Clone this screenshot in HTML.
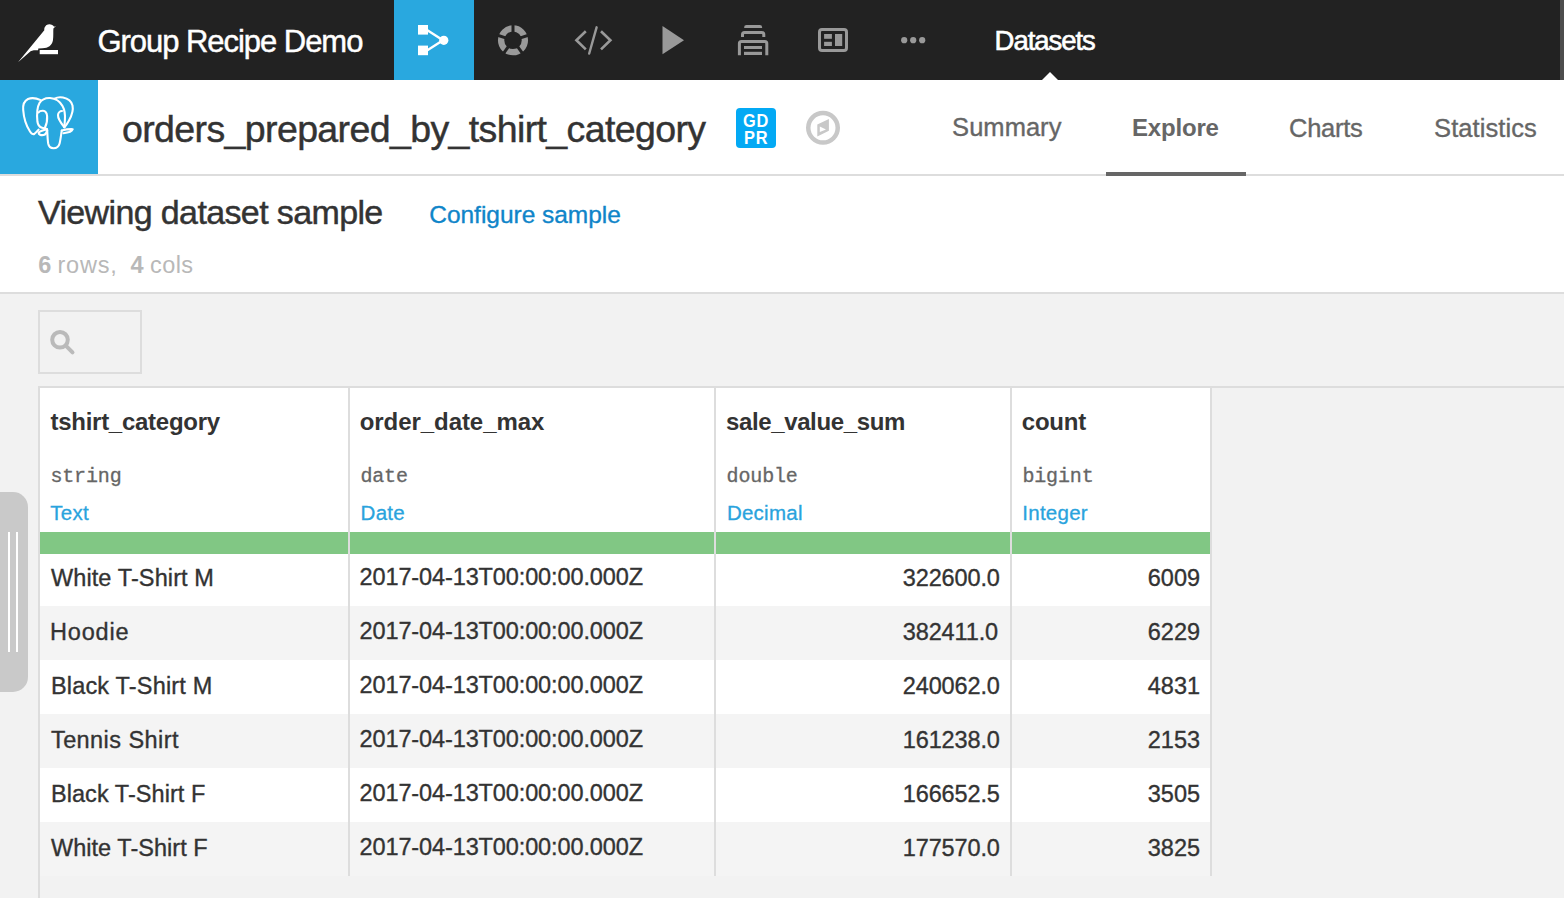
<!DOCTYPE html>
<html><head><meta charset="utf-8">
<style>
*{box-sizing:border-box;margin:0;padding:0}
html,body{width:1564px;height:898px;overflow:hidden;background:#f2f2f2;font-family:"Liberation Sans",sans-serif}
.a{position:absolute}
.t{position:absolute;white-space:nowrap;line-height:1}
svg{position:absolute;overflow:visible}
</style></head><body>
<div class="a" style="left:0;top:0;width:1564px;height:80px;background:#222"></div>
<div class="a" style="left:0;top:80px;width:1564px;height:212px;background:#fff"></div>
<div class="a" style="left:0;top:174px;width:1564px;height:2px;background:#ddd"></div>
<div class="a" style="left:0;top:292px;width:1564px;height:2px;background:#ddd"></div>

<!-- bird -->
<svg width="1564" height="80" style="left:0;top:0"><path fill="#fff" d="M18,62.3 L44.3,30.3 C43.9,27.2 46.2,24.2 49.2,24.2 C51.6,24.2 53.2,25.3 54.1,26.8 L56,26.1 L53.4,28.4 C53.1,31.5 53.6,36 52.9,40.5 C52,45.5 48.2,48.1 42.5,48.3 L38.3,48.4 L38.1,50.2 L33.8,50.2 C32.5,50.3 31.5,50.8 30.6,51.3 Z"/><rect fill="#fff" x="39.7" y="50" width="18.3" height="4.2"/></svg>
<div class="t" style="left:97.45px;top:25.96px;font-size:31px;letter-spacing:-1.039px;color:#fff;font-weight:400;font-family:'Liberation Sans',sans-serif;-webkit-text-stroke:0.45px #fff;">Group Recipe Demo</div>
<div class="a" style="left:394px;top:0;width:80px;height:80px;background:#29a8df"></div>
<svg width="1564" height="80" style="left:0;top:0"><rect fill="#fff" x="418" y="25" width="10" height="9.6"/><rect fill="#fff" x="418" y="45.6" width="10" height="9.6"/><path d="M427,30 L443,40.3 L427,50.5" fill="none" stroke="#fff" stroke-width="2.4"/><circle cx="443.8" cy="40.3" r="4.6" fill="#fff"/><g transform="translate(513,40.3)"><circle r="11.9" fill="none" stroke="#999" stroke-width="6.3"/><rect x="-1.5" y="-17" width="3" height="10" fill="#222" transform="rotate(0)"/><rect x="-1.5" y="-17" width="3" height="10" fill="#222" transform="rotate(72)"/><rect x="-1.5" y="-17" width="3" height="10" fill="#222" transform="rotate(144)"/><rect x="-1.5" y="-17" width="3" height="10" fill="#222" transform="rotate(216)"/><rect x="-1.5" y="-17" width="3" height="10" fill="#222" transform="rotate(288)"/></g><path d="M585.8,31.3 L576.4,40.3 L585.8,49.4 M601,31.3 L610.4,40.3 L601,49.4" fill="none" stroke="#999" stroke-width="2.6"/><path d="M596.6,27.3 L589.2,53.5" fill="none" stroke="#999" stroke-width="2.4" stroke-linecap="round"/><path d="M662.5,26 L684,40.3 L662.5,54.2 Z" fill="#999"/><path d="M744.2,28 L744.2,27 Q744.2,25 746.5,25 L759.8,25 Q762.1,25 762.1,27 L762.1,28 Z" fill="#999"/><path d="M742.5,37 L742.5,34.5 Q742.5,32.5 744.5,32.5 L761.8,32.5 Q763.8,32.5 763.8,34.5 L763.8,37" fill="none" stroke="#999" stroke-width="3"/><path d="M739.4,55.2 L739.4,43.5 Q739.4,41.5 741.4,41.5 L764.8,41.5 Q766.8,41.5 766.8,43.5 L766.8,55.2" fill="none" stroke="#999" stroke-width="3"/><rect x="744" y="46" width="18" height="3" fill="#999"/><rect x="744" y="51.8" width="18" height="3.2" fill="#999"/><rect x="819.5" y="29.4" width="27" height="21.2" rx="2.5" fill="none" stroke="#999" stroke-width="3"/><rect x="824.1" y="34" width="7.8" height="4.8" fill="#999"/><rect x="824.1" y="41.8" width="7.8" height="4.2" fill="#999"/><rect x="835" y="34" width="7.2" height="12" fill="#999"/><circle cx="904.2" cy="40.2" r="3.1" fill="#999"/><circle cx="913.2" cy="40.2" r="3.1" fill="#999"/><circle cx="922.2" cy="40.2" r="3.1" fill="#999"/><path d="M1042,80 L1050,72 L1058,80 Z" fill="#fff"/></svg>
<div class="t" style="left:994.6px;top:26.82px;font-size:27.5px;letter-spacing:-1.05px;color:#fff;-webkit-text-stroke:0.6px #fff">Datasets</div>
<div class="a" style="left:1560px;top:0;width:4px;height:80px;background:#4d4d4d"></div>
<div class="a" style="left:0;top:80px;width:98px;height:94px;background:#29a8df"></div>
<svg width="1564" height="200" style="left:0;top:0"><g fill="none" stroke="#fff" stroke-width="2.1" stroke-linecap="round" stroke-linejoin="round"><path d="M40.7,100.1 C36,98 31,97.8 28,99 C24,101 22.8,105 23.2,110 C23.8,118 27,127 30,131.5 C31.5,133.8 33,134.8 34.5,133.8 C36,132.6 37.5,130.8 38.6,129.6"/><path d="M64.3,127 C64.5,125.5 64.7,123 64.9,120 C65.2,116 64.8,110 62.5,106 C60,101.5 55,98.3 50,98 C46,97.8 42,99 39.5,103 C37.2,107 36.8,115 37.4,121.5 C37.8,124.5 39.5,127 42,127.8 C43.5,128.3 45.5,128.6 47,129"/><path d="M38.5,112.5 C39.5,111 41,110.7 43,110.8 C45.5,111 46.8,113 47.1,116 C47.4,120 46.5,124.5 45,127.5"/><path d="M54.7,98.6 C57,97.2 60,96.9 63,97.5 C68,98.5 71.5,101.5 72.5,105.5 C73.5,110 71.5,116 69,120.5 C67.5,123.2 65.8,125.8 64.3,127.5"/><path d="M62,111 C60,111 58.2,112.8 58,115 C57.8,118.5 60.5,122.5 64.2,127"/><path d="M47,129.3 C44,130 40.5,131 38.6,132.5 C38.5,134.5 41,135.5 43.5,135 C45.5,134.5 46.8,132.5 47.2,130"/><path d="M47.2,130 C47.4,134 47.6,140 48.2,143.5 C48.8,146.5 50.8,148.2 53.5,148.2 C56.5,148.2 58.8,146.5 59.6,143.5 C60.5,140 61.2,134 61.8,130.5"/><path d="M61.8,130.5 C64.5,129.8 69,129 72.7,129.2 C72,131.3 68,132.8 63.5,133.2"/></g></svg>
<div class="t" style="left:122.0px;top:111.26px;font-size:37.5px;letter-spacing:-0.621px;color:#333;font-weight:400;font-family:'Liberation Sans',sans-serif;-webkit-text-stroke:0.45px #333;">orders_prepared_by_tshirt_category</div>
<div class="a" style="left:736px;top:108px;width:40px;height:40px;border-radius:4px;background:#03a9f4"></div>
<div class="t" style="left:742.8399999999999px;top:110.64px;font-size:19px;letter-spacing:1px;font-weight:700;color:#fff;transform:scaleX(0.86);transform-origin:0 0">GD</div>
<div class="t" style="left:743.91px;top:127.73px;font-size:19px;letter-spacing:1px;font-weight:700;color:#fff;transform:scaleX(0.86);transform-origin:0 0">PR</div>
<svg width="1564" height="200" style="left:0;top:0"><circle cx="823" cy="127.8" r="14.75" fill="none" stroke="#c8c8c8" stroke-width="4.5"/><path fill="#c8c8c8" fill-rule="evenodd" d="M817.3,124.5 L828.9,119 L828.9,130.8 L817.3,136.4 Z M819.8,126.4 L826,129.5 L819.8,132 Z"/></svg>
<div class="t" style="left:952.12px;top:115.21px;font-size:25.5px;letter-spacing:0.032px;color:#666;font-weight:400;font-family:'Liberation Sans',sans-serif;-webkit-text-stroke:0.35px #666;">Summary</div>
<div class="t" style="left:1132.02px;top:115.68px;font-size:24px;letter-spacing:-0.19px;color:#666;font-weight:700;font-family:'Liberation Sans',sans-serif;">Explore</div>
<div class="t" style="left:1289.12px;top:115.50999999999999px;font-size:25.5px;letter-spacing:-0.306px;color:#666;font-weight:400;font-family:'Liberation Sans',sans-serif;-webkit-text-stroke:0.35px #666;">Charts</div>
<div class="t" style="left:1434.12px;top:115.50999999999999px;font-size:25.5px;letter-spacing:0.077px;color:#666;font-weight:400;font-family:'Liberation Sans',sans-serif;-webkit-text-stroke:0.35px #666;">Statistics</div>
<div class="a" style="left:1106px;top:172px;width:140px;height:4px;background:#666"></div>
<div class="t" style="left:37.96px;top:195.22px;font-size:34px;letter-spacing:-0.627px;color:#333;font-weight:400;font-family:'Liberation Sans',sans-serif;-webkit-text-stroke:0.45px #333;">Viewing dataset sample</div>
<div class="t" style="left:429.28px;top:203.06px;font-size:24.5px;letter-spacing:-0.029px;color:#0f85c9;font-weight:400;font-family:'Liberation Sans',sans-serif;-webkit-text-stroke:0.35px #0f85c9;">Configure sample</div>
<div class="t" style="left:38.26px;top:253.81px;font-size:23.5px;letter-spacing:0px;font-weight:700;color:#b8b8b8">6</div>
<div class="t" style="left:57.46px;top:253.81px;font-size:23.5px;letter-spacing:0.824px;font-weight:400;color:#b8b8b8">rows,</div>
<div class="t" style="left:130.53px;top:253.81px;font-size:23.5px;letter-spacing:0px;font-weight:700;color:#b8b8b8">4</div>
<div class="t" style="left:150.06px;top:253.81px;font-size:23.5px;letter-spacing:0.417px;font-weight:400;color:#b8b8b8">cols</div>
<div class="a" style="left:38px;top:310px;width:104px;height:64px;border:2px solid #ddd"></div>
<svg width="200" height="400" style="left:0;top:0"><circle cx="60" cy="339.8" r="7.8" fill="none" stroke="#bababa" stroke-width="4"/><path d="M65.8,345.6 L72.5,352.3" stroke="#bababa" stroke-width="4" stroke-linecap="round"/></svg>
<div class="a" style="left:38px;top:386px;width:1526px;height:2px;background:#ddd"></div>
<div class="a" style="left:40px;top:388px;width:1170px;height:488px;background:#fff"></div>
<div class="a" style="left:40px;top:532px;width:1170px;height:22px;background:#81c784"></div>
<div class="a" style="left:40px;top:554px;width:1170px;height:52px;background:#fff"></div>
<div class="a" style="left:40px;top:606px;width:1170px;height:54px;background:#f4f4f4"></div>
<div class="a" style="left:40px;top:660px;width:1170px;height:54px;background:#fff"></div>
<div class="a" style="left:40px;top:714px;width:1170px;height:54px;background:#f4f4f4"></div>
<div class="a" style="left:40px;top:768px;width:1170px;height:54px;background:#fff"></div>
<div class="a" style="left:40px;top:822px;width:1170px;height:54px;background:#f4f4f4"></div>
<div class="a" style="left:38px;top:388px;width:2px;height:488px;background:#ddd"></div>
<div class="a" style="left:348px;top:388px;width:2px;height:488px;background:#ddd"></div>
<div class="a" style="left:714px;top:388px;width:2px;height:488px;background:#ddd"></div>
<div class="a" style="left:1010px;top:388px;width:2px;height:488px;background:#ddd"></div>
<div class="a" style="left:1210px;top:388px;width:2px;height:488px;background:#ddd"></div>
<div class="a" style="left:38px;top:876px;width:2px;height:22px;background:#ddd"></div>
<div class="t" style="left:50.46px;top:409.68px;font-size:24px;letter-spacing:-0.267px;color:#333;font-weight:700;font-family:'Liberation Sans',sans-serif;">tshirt_category</div>
<div class="t" style="left:359.74px;top:409.68px;font-size:24px;letter-spacing:-0.063px;color:#333;font-weight:700;font-family:'Liberation Sans',sans-serif;">order_date_max</div>
<div class="t" style="left:725.94px;top:409.68px;font-size:24px;letter-spacing:-0.368px;color:#333;font-weight:700;font-family:'Liberation Sans',sans-serif;">sale_value_sum</div>
<div class="t" style="left:1021.74px;top:409.68px;font-size:24px;letter-spacing:-0.195px;color:#333;font-weight:700;font-family:'Liberation Sans',sans-serif;">count</div>
<div class="t" style="left:50.400000000000006px;top:466.67px;font-size:20px;letter-spacing:-0.15px;color:#666;-webkit-text-stroke:0.3px #666;font-family:'Liberation Mono',monospace">string</div>
<div class="t" style="left:360.4px;top:466.67px;font-size:20px;letter-spacing:-0.15px;color:#666;-webkit-text-stroke:0.3px #666;font-family:'Liberation Mono',monospace">date</div>
<div class="t" style="left:726.6px;top:466.67px;font-size:20px;letter-spacing:-0.15px;color:#666;-webkit-text-stroke:0.3px #666;font-family:'Liberation Mono',monospace">double</div>
<div class="t" style="left:1022.4000000000001px;top:466.67px;font-size:20px;letter-spacing:-0.15px;color:#666;-webkit-text-stroke:0.3px #666;font-family:'Liberation Mono',monospace">bigint</div>
<div class="t" style="left:50.300000000000004px;top:503.15000000000003px;font-size:20.5px;letter-spacing:0.25px;color:#29a3dd;-webkit-text-stroke:0.3px #29a3dd">Text</div>
<div class="t" style="left:360.6px;top:503.15000000000003px;font-size:20.5px;letter-spacing:0.25px;color:#29a3dd;-webkit-text-stroke:0.3px #29a3dd">Date</div>
<div class="t" style="left:726.9px;top:503.15000000000003px;font-size:20.5px;letter-spacing:0.25px;color:#29a3dd;-webkit-text-stroke:0.3px #29a3dd">Decimal</div>
<div class="t" style="left:1022.3000000000001px;top:503.15000000000003px;font-size:20.5px;letter-spacing:0.25px;color:#29a3dd;-webkit-text-stroke:0.3px #29a3dd">Integer</div>
<div class="t" style="left:50.96px;top:567.11px;font-size:23.5px;letter-spacing:0.105px;color:#333;-webkit-text-stroke:0.35px #333">White T-Shirt M</div>
<div class="t" style="left:359.52px;top:566.41px;font-size:23.5px;letter-spacing:-0.114px;color:#333;-webkit-text-stroke:0.35px #333">2017-04-13T00:00:00.000Z</div>
<div class="t" style="left:902.76px;top:566.91px;font-size:23.5px;letter-spacing:-0.131px;color:#333;-webkit-text-stroke:0.35px #333">322600.0</div>
<div class="t" style="left:1147.82px;top:566.91px;font-size:23.5px;letter-spacing:-0.018px;color:#333;-webkit-text-stroke:0.35px #333">6009</div>
<div class="t" style="left:49.96px;top:621.11px;font-size:23.5px;letter-spacing:0.845px;color:#333;-webkit-text-stroke:0.35px #333">Hoodie</div>
<div class="t" style="left:359.52px;top:620.41px;font-size:23.5px;letter-spacing:-0.114px;color:#333;-webkit-text-stroke:0.35px #333">2017-04-13T00:00:00.000Z</div>
<div class="t" style="left:902.76px;top:620.91px;font-size:23.5px;letter-spacing:-0.131px;color:#333;-webkit-text-stroke:0.35px #333">382411.0</div>
<div class="t" style="left:1147.82px;top:620.91px;font-size:23.5px;letter-spacing:-0.018px;color:#333;-webkit-text-stroke:0.35px #333">6229</div>
<div class="t" style="left:50.96px;top:675.11px;font-size:23.5px;letter-spacing:0.175px;color:#333;-webkit-text-stroke:0.35px #333">Black T-Shirt M</div>
<div class="t" style="left:359.52px;top:674.41px;font-size:23.5px;letter-spacing:-0.114px;color:#333;-webkit-text-stroke:0.35px #333">2017-04-13T00:00:00.000Z</div>
<div class="t" style="left:902.76px;top:674.91px;font-size:23.5px;letter-spacing:-0.131px;color:#333;-webkit-text-stroke:0.35px #333">240062.0</div>
<div class="t" style="left:1147.82px;top:674.91px;font-size:23.5px;letter-spacing:-0.018px;color:#333;-webkit-text-stroke:0.35px #333">4831</div>
<div class="t" style="left:50.96px;top:729.11px;font-size:23.5px;letter-spacing:0.425px;color:#333;-webkit-text-stroke:0.35px #333">Tennis Shirt</div>
<div class="t" style="left:359.52px;top:728.41px;font-size:23.5px;letter-spacing:-0.114px;color:#333;-webkit-text-stroke:0.35px #333">2017-04-13T00:00:00.000Z</div>
<div class="t" style="left:902.76px;top:728.91px;font-size:23.5px;letter-spacing:-0.131px;color:#333;-webkit-text-stroke:0.35px #333">161238.0</div>
<div class="t" style="left:1147.82px;top:728.91px;font-size:23.5px;letter-spacing:-0.018px;color:#333;-webkit-text-stroke:0.35px #333">2153</div>
<div class="t" style="left:50.96px;top:783.11px;font-size:23.5px;letter-spacing:0.055px;color:#333;-webkit-text-stroke:0.35px #333">Black T-Shirt F</div>
<div class="t" style="left:359.52px;top:782.41px;font-size:23.5px;letter-spacing:-0.114px;color:#333;-webkit-text-stroke:0.35px #333">2017-04-13T00:00:00.000Z</div>
<div class="t" style="left:902.76px;top:782.91px;font-size:23.5px;letter-spacing:-0.131px;color:#333;-webkit-text-stroke:0.35px #333">166652.5</div>
<div class="t" style="left:1147.82px;top:782.91px;font-size:23.5px;letter-spacing:-0.018px;color:#333;-webkit-text-stroke:0.35px #333">3505</div>
<div class="t" style="left:50.96px;top:837.11px;font-size:23.5px;letter-spacing:0.035px;color:#333;-webkit-text-stroke:0.35px #333">White T-Shirt F</div>
<div class="t" style="left:359.52px;top:836.41px;font-size:23.5px;letter-spacing:-0.114px;color:#333;-webkit-text-stroke:0.35px #333">2017-04-13T00:00:00.000Z</div>
<div class="t" style="left:902.76px;top:836.91px;font-size:23.5px;letter-spacing:-0.131px;color:#333;-webkit-text-stroke:0.35px #333">177570.0</div>
<div class="t" style="left:1147.82px;top:836.91px;font-size:23.5px;letter-spacing:-0.018px;color:#333;-webkit-text-stroke:0.35px #333">3825</div>
<div class="a" style="left:0;top:492px;width:28px;height:200px;background:#c9c9c9;border-radius:0 15px 15px 0"></div>
<div class="a" style="left:8px;top:532px;width:2px;height:120px;background:#fff"></div>
<div class="a" style="left:16px;top:532px;width:2px;height:120px;background:#fff"></div>
</body></html>
